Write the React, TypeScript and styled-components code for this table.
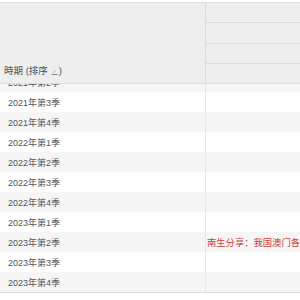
import { FC } from "react";
import styled, { createGlobalStyle } from "styled-components";

const GlobalStyle = createGlobalStyle`
    html, body {
        margin: 0;
        padding: 0;
        background: #ffffff;
    }
    body {
        font-family: "Liberation Sans", "Noto Sans CJK SC", sans-serif;
    }
`;

const Frame = styled.div`
    width: 300px;
    height: 300px;
    padding-top: 2px;
    box-sizing: border-box;
    overflow: hidden;
`;

const Table = styled.div`
    width: 320px;
    border-top: 1px solid #dedede;
`;

const Header = styled.div`
    display: flex;
    height: 80px;
    background: #eeeeee;
    border-bottom: 1px solid #dcdcdc;
`;

const HeadMain = styled.div`
    width: 206px;
    flex-shrink: 0;
    border-right: 1px solid #dcdcdc;
    display: flex;
    align-items: flex-end;
    padding: 0 0 6px 4px;
    box-sizing: border-box;
    font-size: 9.5px;
    color: #555555;
`;

const HeadStack = styled.div`
    flex: 1;
    display: flex;
    flex-direction: column;
`;

const HeadSub = styled.div`
    flex: 1;
    border-top: 1px solid #dcdcdc;
    &:first-child {
        border-top: none;
    }
`;

const SortMark = styled.svg`
    width: 7px;
    height: 7px;
    margin: 0 1px 0 3px;
    vertical-align: -1px;
`;

const Body = styled.div`
    height: 208px;
    overflow: hidden;
    border-bottom: 1px solid #dcdcdc;
`;

const Rows = styled.div`
    margin-top: -12px;
`;

const Row = styled.div<{ $shade: boolean }>`
    display: flex;
    height: 20px;
    background: ${(p) => (p.$shade ? "#f5f5f5" : "#ffffff")};
`;

const PeriodCell = styled.div`
    width: 206px;
    flex-shrink: 0;
    border-right: 1px solid #e6e6e6;
    display: flex;
    align-items: center;
    padding-left: 8px;
    box-sizing: border-box;
    font-size: 9px;
    color: #555555;
`;

const NoteCell = styled.div`
    flex: 1;
    display: flex;
    align-items: center;
    padding-left: 1px;
    font-size: 9.3px;
    color: #c9403a;
    white-space: nowrap;
    overflow: hidden;
`;

const periods = [
    "2021年第2季",
    "2021年第3季",
    "2021年第4季",
    "2022年第1季",
    "2022年第2季",
    "2022年第3季",
    "2022年第4季",
    "2023年第1季",
    "2023年第2季",
    "2023年第3季",
    "2023年第4季",
];

const notes: Record<string, string> = {
    "2023年第2季": "南生分享：我国澳门各",
};

const App: FC = () => {
    return (
        <Frame>
            <GlobalStyle />
            <Table>
                <Header>
                    <HeadMain>
                        <span>
                            時期 (排序
                            <SortMark viewBox="0 0 7 7">
                                <path d="M0.5 6.5 H6.5" stroke="#888" strokeWidth="1" />
                                <path d="M2 5 L4.5 2.5" stroke="#999" strokeWidth="0.8" />
                            </SortMark>
                            )
                        </span>
                    </HeadMain>
                    <HeadStack>
                        <HeadSub />
                        <HeadSub />
                        <HeadSub />
                        <HeadSub />
                    </HeadStack>
                </Header>
                <Body>
                    <Rows>
                        {periods.map((p, i) => (
                            <Row key={p} $shade={i % 2 === 0}>
                                <PeriodCell>{p}</PeriodCell>
                                <NoteCell>{notes[p]}</NoteCell>
                            </Row>
                        ))}
                    </Rows>
                </Body>
            </Table>
        </Frame>
    );
};

export default App;
